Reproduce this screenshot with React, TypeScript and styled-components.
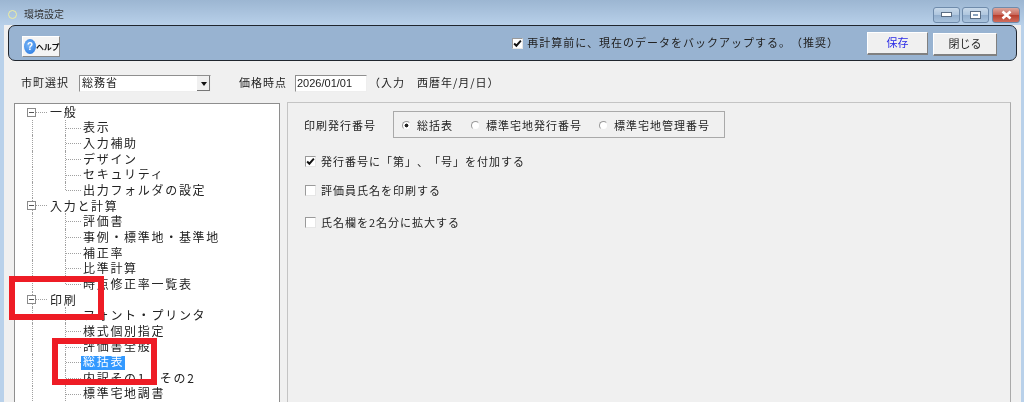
import React from "react";
import styled, { createGlobalStyle, css } from "styled-components";

const FONT = `"Noto Sans CJK JP", "Noto Sans", sans-serif`;

const Global = createGlobalStyle`
  html, body { margin: 0; padding: 0; width: 1024px; height: 402px; overflow: hidden; background: #b9d1ea; }
  #root { width: 1024px; height: 402px; }
`;

const Win = styled.div`
  width: 1024px; height: 402px; overflow: hidden; position: relative;
  display: flex; flex-direction: column;
  font: 11px/16px ${FONT}; letter-spacing: 1px; color: #222;
  text-spacing-trim: space-all;
  background: linear-gradient(180deg, #9cb6d2 0, #b9d1ea 26px);
  filter: blur(0.35px);
`;
const TitleBar = styled.div`
  height: 25px; flex: none; box-sizing: border-box; display: flex; align-items: center; padding: 4px 4px 0 8px;
`;
const AppIcon = styled.span`
  width: 9px; height: 9px; box-sizing: border-box; border-radius: 50%; border: 1.5px solid #efeea0; margin-right: 7px;
`;
const TitleText = styled.span`
  font-size: 10px; letter-spacing: 0; color: #333; flex: 1; padding-bottom: 1px;
`;
const Caption = styled.div`display: flex; gap: 2px;`;
const CapBtn = styled.div<{ $close?: boolean }>`
  width: ${p => (p.$close ? 28 : 27)}px; height: 16px; box-sizing: border-box; border-radius: 3px; border: 1px solid #6f8bab;
  display: flex; align-items: center; justify-content: center;
  margin-left: ${p => (p.$close ? 1 : 0)}px;
  background: ${p => p.$close
    ? "linear-gradient(180deg,#dca79d 0,#c9675a 48%,#b83e2d 52%,#cf6d5d 100%)"
    : "linear-gradient(180deg,#c8d9ea 0,#afc6de 48%,#93afce 52%,#a9c3dd 100%)"};
`;
const Content = styled.div`
  flex: 1; margin: 0 3px 0 4px; background: #f0f0f0; display: flex; flex-direction: column; min-height: 0;
`;
const Toolbar = styled.div`
  height: 36px; flex: none; box-sizing: border-box; margin: 0 4px; background: #98b3d1; border: 1px solid #20262e; border-radius: 7px;
  display: flex; align-items: center; padding: 0 19px 0 13px;
`;
const HelpButton = styled.div`
  width: 38px; height: 21px; box-sizing: border-box; margin-top: 7px; background: #f4f4f4;
  border: 1px solid #fff; border-right-color: #888; border-bottom-color: #888;
  display: flex; align-items: center; gap: 0; padding-left: 1px;
  font-size: 8px; font-weight: 700; letter-spacing: -0.2px; color: #111; white-space: nowrap;
`;
const HelpIcon = styled.span`
  width: 12px; height: 15px; flex: none; border-radius: 50%; background: radial-gradient(circle at 40% 40%, #7ab6f6, #1d72e0);
  color: #fff; font: 700 10px/15px "Liberation Sans", sans-serif; text-align: center;
`;
const BackupLabel = styled.label`
  margin-left: auto; display: flex; align-items: center; white-space: nowrap;
`;
const Txt = styled.span`padding-bottom: 3px;`;
const Box = styled.span`
  width: 11px; height: 11px; flex: none; box-sizing: border-box; background: #fff; margin-right: 4px;
  border: 1px solid #9a9a9a; border-right-color: #e6e6e6; border-bottom-color: #e6e6e6;
  display: flex; align-items: center; justify-content: center;
`;
const ActionButton = styled.div<{ $blue?: boolean; $w: number; $mt: number }>`
  width: ${p => p.$w}px; height: 23px; margin-top: ${p => p.$mt}px; box-sizing: border-box; display: flex; align-items: center; justify-content: center;
  background: #f0f0f0; border: 1px solid #fff; border-right: 1px solid #808080; border-bottom: 2px solid #808080;
  letter-spacing: 0; padding-bottom: 2px; color: ${p => (p.$blue ? "#2a2ae6" : "#222")};
`;
const SaveButton = styled(ActionButton)`margin-left: 28px; margin-right: 5px;`;
const ParamRow = styled.div`
  height: 41px; flex: none; box-sizing: border-box; display: flex; align-items: center; padding: 4px 0 0 17px; white-space: nowrap;
`;
const Sunken = css`
  background: #fff; box-sizing: border-box;
  border: 1px solid #8f8f8f; border-bottom-color: #eee; border-right-color: #eee;
`;
const Select = styled.div`
  ${Sunken}; width: 132px; height: 17px; margin-left: 10px; display: flex; align-items: center; padding-left: 2px;
`;
const SelectText = styled.span`flex: 1; padding-bottom: 3px;`;
const SelectArrow = styled.span`
  width: 13px; height: 15px; background: #f0f0f0; border-left: 1px solid #fff; box-shadow: inset -1px -1px 0 #777;
  display: flex; align-items: center; justify-content: center;
  &::before { content: ""; border: 3px solid transparent; border-top: 4px solid #111; border-bottom: 0; }
`;
const PriceLabel = styled(Txt)`margin-left: 28px;`;
const DateInput = styled.div`
  ${Sunken}; width: 72px; height: 17px; margin: 0 2px 0 8px; padding-left: 1px;
  font: 11px/15px "Liberation Sans", sans-serif; letter-spacing: 0;
`;
const Panes = styled.div`
  flex: 1; display: flex; gap: 7px; padding: 0 10px; min-height: 0;
`;
const Tree = styled.div`
  width: 266px; flex: none; box-sizing: border-box; background: #fff; margin-top: 1px;
  border: 1px solid #8e8e8e; border-bottom: 0; overflow: hidden;
`;
const LINE = "#a0a0a0";
const Row = styled.div<{ $child?: boolean; $noRoot?: boolean }>`
  height: 15.65px; position: relative; box-sizing: border-box; display: flex; align-items: center;
  padding-left: ${p => (p.$child ? 68 : 35)}px; font-size: 12px; letter-spacing: 1.7px; white-space: nowrap; color: #222;
  ${p => !p.$noRoot && css`
    &::before { content: ""; position: absolute; left: 17px; top: 0; bottom: 0; border-left: 1px dotted ${LINE}; }
  `}
`;
const Branch = styled.span<{ $last?: boolean }>`
  position: absolute; left: 50px; top: 0; width: 15px; height: ${p => (p.$last ? "8px" : "100%")};
  border-left: 1px dotted ${LINE};
  &::after { content: ""; position: absolute; left: 0; top: 8px; width: 15px; border-top: 1px dotted ${LINE}; }
`;
const Expander = styled.span`
  position: absolute; left: 12px; top: 3.5px; width: 9px; height: 9px; box-sizing: border-box; background: #fff;
  border: 1px solid #8a8a8a; z-index: 1;
  &::before { content: ""; position: absolute; left: 1px; right: 1px; top: 3px; border-top: 1px solid #555; }
  &::after { content: ""; position: absolute; left: 8px; top: 3px; width: 11px; border-top: 1px dotted ${LINE}; }
`;
const Selected = styled.span`
  display: block; height: 14px; background: #3399ff; color: #fff; padding: 0 1px 0 2px; margin-left: -2px; line-height: 10px;
  transform: translateY(1px);
`;
const Detail = styled.div`
  flex: 1; box-sizing: border-box; border: 1px solid #c4c4c4; border-right-color: #aaa; border-bottom: 0; padding: 8px 0 0 16px; background: #f0f0f0;
`;
const IssueRow = styled.div`display: flex; align-items: center;`;
const IssueLabel = styled.span`width: 89px;`;
const RadioGroup = styled.div`
  width: 332px; height: 27px; box-sizing: border-box; border: 1px solid #a9a9a9; display: flex; align-items: center; padding-left: 8px;
`;
const Radio = styled.span<{ $on?: boolean }>`
  width: 9px; height: 9px; box-sizing: border-box; border-radius: 50%; border: 1px solid #999; border-bottom-color: #eee; border-right-color: #eee;
  background: ${p => (p.$on ? "radial-gradient(circle,#222 0 1.7px,#fff 2.2px)" : "#fff")}; margin: 1px 6px 0 0; flex: none;
`;
const RadioItem = styled.span<{ $w: number }>`
  width: ${p => p.$w}px; flex: none; display: flex; align-items: center; white-space: nowrap;
`;
const CheckRow = styled.div<{ $mt: number }>`
  display: flex; align-items: center; margin: ${p => p.$mt}px 0 0 1px; white-space: nowrap;
`;
const CheckText = styled.span`margin-left: 1px;`;
const RedFrame = styled.div<{ $x: number; $y: number; $w: number; $h: number }>`
  position: absolute; left: ${p => p.$x}px; top: ${p => p.$y}px; width: ${p => p.$w}px; height: ${p => p.$h}px;
  box-sizing: border-box; border: 6.5px solid #ee1c25;
`;

const Check = () => (
  <svg width="9" height="9" viewBox="0 0 8 8"><path d="M1 4l2 2 4-4.5" fill="none" stroke="#111" strokeWidth="1.7" /></svg>
);

type Node = { t: string; kids: string[] };
const tree: Node[] = [
  { t: "一般", kids: ["表示", "入力補助", "デザイン", "セキュリティ", "出力フォルダの設定"] },
  { t: "入力と計算", kids: ["評価書", "事例・標準地・基準地", "補正率", "比準計算", "時点修正率一覧表"] },
  { t: "印刷", kids: ["フォント・プリンタ", "様式個別指定", "評価書全般", "総括表", "内訳その1、その2", "標準宅地調書"] },
];

export default function App() {
  return (
    <Win>
      <Global />
      <TitleBar>
        <AppIcon />
        <TitleText>環境設定</TitleText>
        <Caption>
          <CapBtn>
            <svg width="11" height="5"><rect x="0.5" y="0.5" width="10" height="4" fill="#fff" stroke="#5a6d84" /></svg>
          </CapBtn>
          <CapBtn>
            <svg width="11" height="8"><rect x="0.5" y="0.5" width="10" height="7" fill="#fff" stroke="#5a6d84" /><rect x="3" y="3" width="5" height="2" fill="#8aa3bf" /></svg>
          </CapBtn>
          <CapBtn $close>
            <svg width="13" height="10"><path d="M2.5 1.5l8 7M10.5 1.5l-8 7" stroke="#fff" strokeWidth="2.6" /></svg>
          </CapBtn>
        </Caption>
      </TitleBar>
      <Content>
        <Toolbar>
          <HelpButton><HelpIcon>?</HelpIcon>ヘルプ</HelpButton>
          <BackupLabel><Box><Check /></Box><Txt>再計算前に、現在のデータをバックアップする。（推奨）</Txt></BackupLabel>
          <SaveButton $blue $w={61} $mt={0}>保存</SaveButton>
          <ActionButton $w={64} $mt={2}>閉じる</ActionButton>
        </Toolbar>
        <ParamRow>
          <Txt>市町選択</Txt>
          <Select><SelectText>総務省</SelectText><SelectArrow /></Select>
          <PriceLabel>価格時点</PriceLabel>
          <DateInput>2026/01/01</DateInput>
          <Txt>（入力　西暦年/月/日）</Txt>
        </ParamRow>
        <Panes>
          <Tree>
            {tree.map((n, i) => (
              <React.Fragment key={n.t}>
                <Row $noRoot={i === 0}><Expander />{n.t}</Row>
                {n.kids.map((k, j) => (
                  <Row $child key={k}>
                    <Branch $last={i < 2 && j === n.kids.length - 1} />
                    {k === "総括表" ? <Selected>{k}</Selected> : k}
                  </Row>
                ))}
              </React.Fragment>
            ))}
          </Tree>
          <Detail>
            <IssueRow>
              <IssueLabel>印刷発行番号</IssueLabel>
              <RadioGroup>
                <RadioItem $w={69}><Radio $on />総括表</RadioItem>
                <RadioItem $w={128}><Radio />標準宅地発行番号</RadioItem>
                <RadioItem $w={125}><Radio />標準宅地管理番号</RadioItem>
              </RadioGroup>
            </IssueRow>
            <CheckRow $mt={15}><Box><Check /></Box><CheckText>発行番号に「第」、「号」を付加する</CheckText></CheckRow>
            <CheckRow $mt={13}><Box /><CheckText>評価員氏名を印刷する</CheckText></CheckRow>
            <CheckRow $mt={16}><Box /><CheckText>氏名欄を2名分に拡大する</CheckText></CheckRow>
          </Detail>
        </Panes>
      </Content>
      <RedFrame $x={9} $y={276} $w={95} $h={44} />
      <RedFrame $x={52} $y={338} $w={105} $h={47} />
    </Win>
  );
}
